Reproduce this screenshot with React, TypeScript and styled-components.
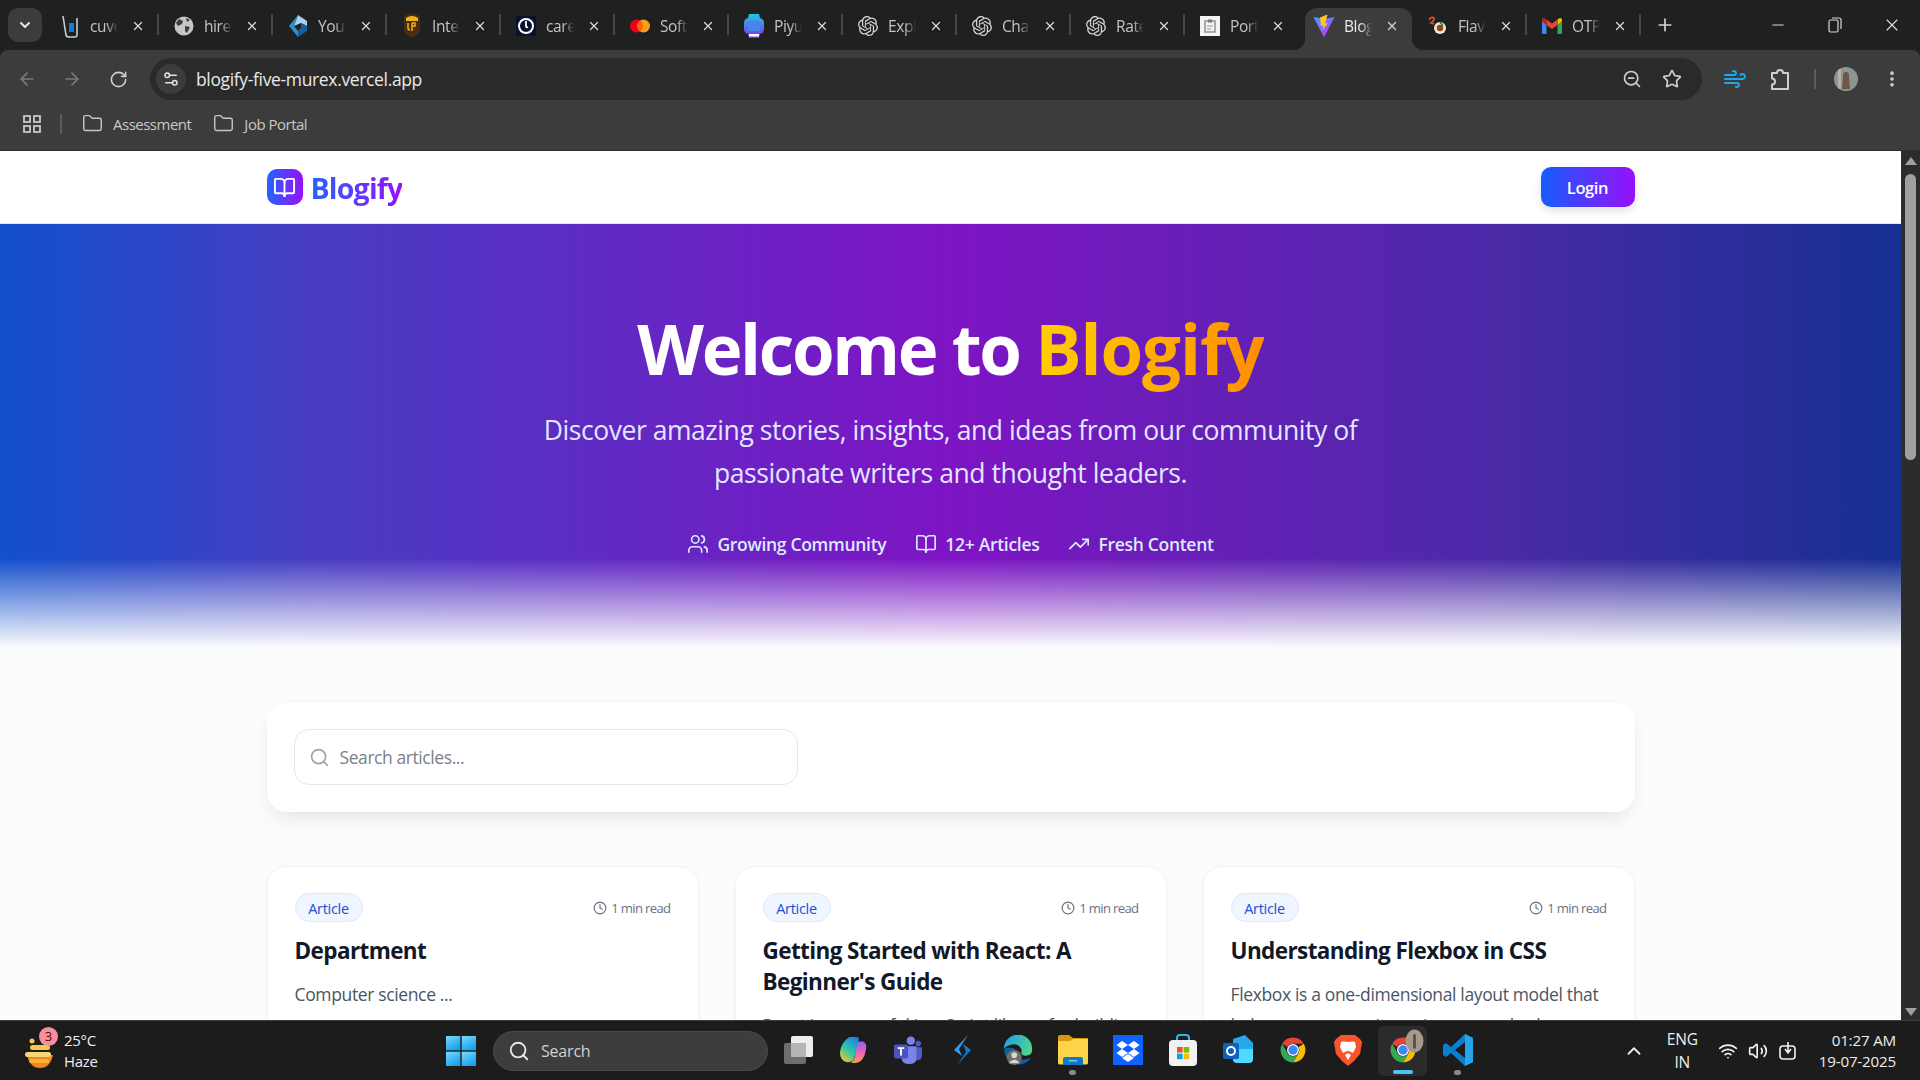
import React from "react";
import styled, { createGlobalStyle } from "styled-components";
import {
  ArrowLeft, ArrowRight, RotateCw, ZoomOut, Star, Wind, EllipsisVertical, Folder, Plus, X,
  ChevronDown, ChevronUp, Minus, Wifi, Volume2, Users, BookOpen, TrendingUp, Search, Clock, Settings2,
} from "lucide-react";
import { SiOpenai } from "react-icons/si";

const UI = `"Open Sans", "Noto Sans", "Liberation Sans", sans-serif`;

const Global = createGlobalStyle`
  html, body { margin: 0; padding: 0; width: 1920px; height: 1080px; overflow: hidden; background: #1f2120; }
  * { box-sizing: border-box; }
  body { font-family: ${UI}; }
`;

const Screen = styled.div`
  width: 1920px; height: 1080px; display: flex; flex-direction: column; overflow: hidden; background: #1f2120;
`;

/* ---------- tab strip ---------- */
const TabStrip = styled.div`
  height: 50px; flex: none; display: flex; align-items: stretch; padding-left: 8px; background: #1f2120; color: #c7c7c7; position: relative;
`;
const TabMenu = styled.div`
  width: 34px; height: 34px; margin-top: 8px; margin-right: 4px; border-radius: 10px; background: #3c3c3c;
  display: flex; align-items: center; justify-content: center; color: #e6e6e6; flex: none;
`;
const Tab = styled.div<{ $sep?: boolean; $active?: boolean }>`
  width: 114px; flex: none; display: flex; align-items: center; padding-left: 14px; position: relative; padding-top: 1px;
  color: ${(p) => (p.$active ? "#e8e8e8" : "#c4c4c4")};
  ${(p) => p.$sep && `&::after { content: ""; position: absolute; right: 1px; top: 14px; width: 2px; height: 21px; background: #464847; }`}
`;
const ActiveShape = styled.div`
  position: absolute; left: 5px; width: 107px; top: 8px; bottom: 0; background: #3c3c3c; border-radius: 12px 12px 0 0;
  &::before, &::after { content: ""; position: absolute; bottom: 0; width: 12px; height: 12px; }
  &::before { left: -12px; background: radial-gradient(circle at 0 0, transparent 12px, #3c3c3c 12.5px); }
  &::after { right: -12px; background: radial-gradient(circle at 100% 0, transparent 12px, #3c3c3c 12.5px); }
`;
const Fav = styled.span`
  width: 20px; height: 20px; flex: none; display: flex; align-items: center; justify-content: center; position: relative;
  svg { display: block; flex: none; }
`;
const TabTitle = styled.span`
  width: 28px; margin-left: 10px; overflow: hidden; white-space: nowrap; font-size: 15.5px; letter-spacing: -0.4px; position: relative;
  -webkit-mask-image: linear-gradient(to right, #000 60%, transparent 100%);
  mask-image: linear-gradient(to right, #000 60%, transparent 100%);
`;
const TabClose = styled.span`
  width: 14px; margin-left: 13px; display: flex; align-items: center; justify-content: center; position: relative; color: #d8d8d8;
`;
const NewTab = styled.div`
  width: 20px; margin-left: 13px; display: flex; align-items: center; justify-content: center; color: #d4d4d4;
`;
const WinControls = styled.div`
  margin-left: auto; display: flex; align-items: center; color: #d8d8d8; padding-bottom: 1px;
`;
const WinBtn = styled.div`
  width: 57px; height: 50px; display: flex; align-items: center; justify-content: center;
`;

/* ---------- toolbar ---------- */
const Toolbar = styled.div`
  height: 50px; flex: none; display: flex; align-items: flex-start; padding-top: 8px; background: #3c3c3c; border-radius: 8px 8px 0 0; color: #c8c8c8;
`;
const NavBtn = styled.div<{ $dim?: boolean; $w: number; $color?: string }>`
  width: ${(p) => p.$w}px; height: 42px; flex: none; display: flex; align-items: center; justify-content: center;
  color: ${(p) => p.$color ?? (p.$dim ? "#7a7a7a" : "#cfcfcf")};
`;
const Omnibox = styled.div`
  width: 1552px; height: 42px; flex: none; border-radius: 21px; background: #2a2a2a; display: flex; align-items: center; padding: 0 10px 0 6px; margin-left: 4px;
`;
const SiteChip = styled.div`
  width: 30px; height: 30px; border-radius: 50%; background: #3c3c3c; display: flex; align-items: center; justify-content: center; color: #e2e2e2; flex: none;
`;
const Url = styled.div`
  margin-left: 10px; font-size: 17.5px; color: #e8e8e8; letter-spacing: -0.35px; flex: 1; white-space: nowrap;
`;
const OmniIcon = styled.div`
  width: 40px; height: 30px; display: flex; align-items: center; justify-content: center; color: #cfcfcf; flex: none;
`;
const ToolSep = styled.div`
  width: 2px; height: 20px; margin: 11px 18px 0 22px; background: #5a5a5a; flex: none;
`;
const Avatar = styled.div`
  width: 24px; height: 24px; border-radius: 50%; margin-top: 9px; flex: none; overflow: hidden; display: block;
  svg { display: block; }
`;

/* ---------- bookmarks ---------- */
const Bookmarks = styled.div`
  height: 51px; flex: none; background: #3c3c3c; display: flex; align-items: center; padding: 0 0 3px 23px; color: #c8c8c8; font-size: 15px; letter-spacing: -0.5px;
  border-bottom: 1px solid #2e2e2e;
`;
const BarSep = styled.div`
  width: 2px; height: 20px; background: #5a5a5a; margin: 0 20px 0 19px;
`;
const Bookmark = styled.div`
  display: flex; align-items: center; gap: 10px; margin-right: 22px; white-space: nowrap;
`;

/* ---------- viewport ---------- */
const Viewport = styled.div`
  flex: 1; min-height: 0; display: flex; overflow: hidden;
`;
const Page = styled.div`
  flex: 1; min-width: 0; background: #fbfcfe; overflow: hidden; color: #111827; font-family: ${UI};
`;
const ScrollTrack = styled.div`
  width: 19px; flex: none; background: #2c2c2c; display: flex; flex-direction: column; align-items: center; position: relative;
`;
const ScrollArrow = styled.div<{ $down?: boolean }>`
  width: 0; height: 0; border-left: 6px solid transparent; border-right: 6px solid transparent;
  ${(p) => (p.$down ? "border-top: 8px solid #a0a0a0; position: absolute; bottom: 4px;" : "border-bottom: 8px solid #a0a0a0; margin-top: 6px;")}
`;
const ScrollThumb = styled.div`
  width: 11px; height: 286px; border-radius: 6px; background: #a0a0a0; margin-top: 9px;
`;
const Nav = styled.div`
  height: 73px; background: #fff; border-bottom: 1px solid #e5e7eb; position: relative; box-shadow: 0 1px 3px rgba(0,0,0,0.12);
`;
const Wrap = styled.div`
  width: 1368px; margin: 0 auto;
`;
const NavRow = styled(Wrap)`
  height: 72px; display: flex; align-items: center; justify-content: space-between;
`;
const Brand = styled.div`
  display: flex; align-items: center; gap: 8px;
`;
const BrandMark = styled.div`
  width: 36px; height: 36px; border-radius: 10px; background: linear-gradient(to right, #2563ff, #9810fa); display: flex; align-items: center; justify-content: center; color: #fff;
`;
const BrandName = styled.div`
  font-size: 28.5px; font-weight: 700; letter-spacing: -0.8px; line-height: 36px; margin-top: 2px;
  background: linear-gradient(to right, #2563ff, #9810fa); -webkit-background-clip: text; background-clip: text; color: transparent;
`;
const LoginBtn = styled.div`
  width: 94px; height: 40px; border-radius: 10px; background: linear-gradient(to right, #155dfc, #9810fa); color: #fff; display: flex; align-items: center; justify-content: center;
  font-size: 16.5px; font-weight: 600; letter-spacing: -0.4px; box-shadow: 0 4px 8px rgba(0,0,0,0.12);
`;
const Hero = styled.div`
  position: relative; height: 424px; padding-top: 79px; text-align: center; color: #fff;
  background: linear-gradient(to right, #1150cc 0%, #463dc3 15.8%, #7e14c4 50%, #4c2aa8 78%, #152f92 100%);
`;
const HeroFade = styled.div`
  position: absolute; left: 0; right: 0; bottom: 0; height: 90px; background: linear-gradient(to top, #fbfcfe, rgba(255,255,255,0));
`;
const HeroTitle = styled.h1`
  margin: 0; font-size: 69px; line-height: 90px; font-weight: 700; letter-spacing: -2.35px;
`;
const Accent = styled.span`
  letter-spacing: -1.1px;
  background: linear-gradient(to right, #ffcf00, #ff8f00); -webkit-background-clip: text; background-clip: text; color: transparent;
`;
const HeroText = styled.p`
  margin: 16px auto 0; width: 860px; font-size: 26.5px; line-height: 42.5px; color: #e0e7ff; letter-spacing: -0.45px;
`;
const Stats = styled.div`
  margin-top: 38px; height: 24px; display: flex; align-items: center; justify-content: center; gap: 29px; color: #dbeafe; font-size: 17.5px; font-weight: 600; letter-spacing: -0.3px;
`;
const Stat = styled.div`
  display: flex; align-items: center; gap: 8px; white-space: nowrap;
`;
const Main = styled(Wrap)`
  padding-top: 54px;
`;
const SearchCard = styled.div`
  height: 110px; border-radius: 20px; background: #fff; padding: 27px; box-shadow: 0 10px 20px -5px rgba(0,0,0,0.1), 0 0 4px rgba(0,0,0,0.02);
`;
const SearchBox = styled.div`
  width: 504px; height: 56px; border: 1px solid #e5e7eb; border-radius: 15px; display: flex; align-items: center; padding-left: 14px; gap: 10px; color: #9ca3af; font-size: 17.5px; background: #fff;
`;
const Placeholder = styled.span`
  color: #7b7f87; letter-spacing: -0.42px;
`;
const Grid = styled.div`
  margin-top: 54px; display: grid; grid-template-columns: repeat(3, 1fr); gap: 36px;
`;
const Card = styled.div`
  height: 320px; border-radius: 20px; background: #fff; border: 1px solid #f3f4f6; padding: 26px 27px; box-shadow: 0 1px 4px rgba(0,0,0,0.04);
`;
const CardHead = styled.div`
  height: 29px; display: flex; align-items: center; justify-content: space-between;
`;
const Badge = styled.div`
  height: 29px; width: 68px; border-radius: 15px; border: 1px solid #dbeafe; background: #eff6ff; color: #1d4ed8; font-size: 14.5px; font-weight: 500; display: flex; align-items: center; justify-content: center; letter-spacing: -0.3px; padding-top: 1px;
`;
const ReadTime = styled.div`
  display: flex; align-items: center; gap: 4px; color: #6b7280; font-size: 13.2px; letter-spacing: -0.7px;
`;
const CardTitle = styled.h3`
  margin: 13px 0 13px; font-size: 22.5px; line-height: 31px; font-weight: 700; color: #111827; letter-spacing: -0.6px;
`;
const CardText = styled.p`
  margin: 0; font-size: 17.5px; line-height: 30.5px; color: #4b5563; letter-spacing: -0.36px;
`;

/* ---------- taskbar ---------- */
const Taskbar = styled.div`
  height: 60px; flex: none; background: #1c1c1c; border-top: 1px solid #3d3d3d; display: flex; align-items: center; color: #fff; position: relative;
`;
const Weather = styled.div`
  width: 446px; flex: none; display: flex; align-items: center; padding-left: 24px; height: 100%;
`;
const WeatherIcon = styled.div`
  width: 32px; height: 36px; position: relative; flex: none;
`;
const CountBadge = styled.div`
  position: absolute; left: 15px; top: -6px; width: 19px; height: 19px; border-radius: 50%; background: #fa8d9c; color: #3a1216; font-size: 13px; display: flex; align-items: center; justify-content: center;
`;
const WeatherText = styled.div`
  margin-left: 8px; font-size: 15px; line-height: 21px; letter-spacing: -0.3px; color: #f0f0f0;
`;
const StartIcon = styled.div`
  width: 30px; flex: none; display: flex;
`;
const TaskSearch = styled.div`
  width: 275px; height: 40px; margin-left: 17px; flex: none; border-radius: 20px; background: #3d3d3d; border: 1px solid #4a4a4a; display: flex; align-items: center; padding-left: 14px; gap: 11px; font-size: 16px; color: #d0d0d0; letter-spacing: -0.2px;
`;
const TaskIcons = styled.div`
  display: flex; margin-left: 2px; flex: none;
`;
const TaskItem = styled.div<{ $active?: boolean; $dot?: boolean }>`
  width: 55px; height: 50px; flex: none; display: flex; align-items: center; justify-content: center; position: relative; padding-bottom: 2px;
  ${(p) => p.$active && `&::before { content: ""; position: absolute; left: 3px; right: 3px; top: 0; bottom: 0; background: #2b2b2b; border-radius: 6px; }
    &::after { content: ""; position: absolute; left: 18px; width: 20px; height: 4px; bottom: 2px; border-radius: 2px; background: #4cc2ff; }`}
  ${(p) => p.$dot && `&::after { content: ""; position: absolute; left: 24px; width: 7px; height: 5px; bottom: 1px; border-radius: 3px; background: #8a8a8a; }`}
  svg { position: relative; display: block; }
`;
const AvatarOverlay = styled.svg`
  && { position: absolute; left: 30px; top: 3px; }
`;
const Tray = styled.div`
  margin-left: auto; display: flex; align-items: center; padding-right: 24px; color: #ededed; letter-spacing: -0.2px;
`;
const TrayLang = styled.div`
  text-align: center; line-height: 23px; font-size: 15.5px; margin: 0 15px 0 22px;
`;
const TrayIcon = styled.div`
  width: 30px; display: flex; justify-content: center; color: #f0f0f0;
`;
const TrayClock = styled.div`
  text-align: right; line-height: 21px; font-size: 15.2px; margin-left: 16px; white-space: nowrap;
`;

/* ---------- drawn icons ---------- */
const OpenAI = () => <SiOpenai size={20} color="#d4d4d4" />;
const favs: Record<string, React.ReactNode> = {
  cuvette: (
    <svg width="20" height="24" viewBox="0 0 20 24"><path d="M3 2 L6 21 Q6.5 23 9 23 H15 Q17 23 17 21 V4" fill="none" stroke="#c6ccd4" strokeWidth="1.6" /><rect x="9" y="9" width="5" height="9" fill="#1577e0" /></svg>
  ),
  globe: (
    <svg width="20" height="20" viewBox="0 0 20 20"><circle cx="10" cy="10" r="9.5" fill="#c4c7c5" /><path d="M5 3 L9 5 L8 8 L4 10 L2 7 Z M11 10 L16 11 L13 17 L11 15 Z M12 2 L16 4 L13 6 Z" fill="#3a3d3c" /></svg>
  ),
  you: (
    <svg width="20" height="24" viewBox="0 0 20 24"><path d="M10 1 L19 7 L19 12 L13 9 L6 12 Z" fill="#a9cfe9" /><path d="M1 12 L10 1 L6 12 L10 17 L10 23 Z" fill="#2f8fd0" /><path d="M19 12 L13 9 L13 14 L10 17 L10 23 L19 17Z" fill="#175f9c" /></svg>
  ),
  ups: (
    <svg width="18" height="24" viewBox="0 0 18 24"><path d="M9 0 Q14 0 17 3 V15 Q17 20 9 24 Q1 20 1 15 V3 Q4 0 9 0Z" fill="#4b2d12" /><path d="M3 4 Q9 0 15 4 V7 H3Z" fill="#f2b21a" /><path d="M5 9 v5 q0 2 2 2 M9 9 v8 M9 9 h3 v3 h-3" fill="none" stroke="#f2b21a" strokeWidth="1.5" /></svg>
  ),
  care: (
    <svg width="20" height="20" viewBox="0 0 20 20"><rect width="20" height="20" fill="#08122c" /><circle cx="10" cy="10" r="7" fill="none" stroke="#fff" strokeWidth="2" /><path d="M10 5 V10 Q10 12 12 11" fill="none" stroke="#fff" strokeWidth="1.8" /></svg>
  ),
  master: (
    <svg width="20" height="14" viewBox="0 0 20 14"><circle cx="6.5" cy="7" r="6.5" fill="#eb001b" /><circle cx="13.5" cy="7" r="6.5" fill="#f79e1b" /><path d="M10 1.6 a6.5 6.5 0 0 1 0 10.8 a6.5 6.5 0 0 1 0 -10.8" fill="#ff5f00" /></svg>
  ),
  piyush: (
    <svg width="20" height="24" viewBox="0 0 20 24"><defs><linearGradient id="pg" x1="0" y1="0" x2="0" y2="1"><stop offset="0" stopColor="#1cc7e8" /><stop offset="1" stopColor="#8a2ce8" /></linearGradient></defs><path d="M5 0 H15 L16 4 Q20 5 20 9 V15 Q20 19 16 20 L15 24 H5 L4 20 Q0 19 0 15 V9 Q0 5 4 4Z" fill="url(#pg)" /><rect x="4" y="7" width="12" height="10" rx="1" fill="#4a83ee" /><rect x="5" y="20" width="10" height="2.5" fill="#fff" /></svg>
  ),
  port: (
    <svg width="20" height="20" viewBox="0 0 20 20"><rect width="20" height="20" fill="#f4f4f4" /><rect x="5" y="5" width="10" height="11" fill="none" stroke="#7a7a7a" strokeWidth="1.2" /><rect x="8" y="3.5" width="4" height="3" fill="#7a7a7a" /><path d="M7 10 h6 M7 13 h4" stroke="#9a9a9a" strokeWidth="1.2" /></svg>
  ),
  vite: (
    <svg width="22" height="24" viewBox="0 0 22 24"><defs><linearGradient id="vg" x1="0" y1="0" x2="0.6" y2="1"><stop offset="0" stopColor="#41a6ff" /><stop offset="1" stopColor="#bd34fe" /></linearGradient></defs><path d="M0.5 3 L11 5 L21.5 3 L11 23.5 Z" fill="url(#vg)" /><path d="M13 1 L7 3.5 L8 12 L10.5 11.5 L9.5 16 L15 9 L12 9.5 L14.5 1 Z" fill="#ffc517" /></svg>
  ),
  flav: (
    <svg width="20" height="20" viewBox="0 0 20 20"><path d="M1 4 Q3 0 6 2 Q7 4 3 7 L6 8" fill="none" stroke="#e8502c" strokeWidth="1.6" /><circle cx="12" cy="12" r="6" fill="#f3e6cf" /><circle cx="12" cy="12" r="3.2" fill="#8b4a20" /><path d="M12 6 L15 10" stroke="#2f7a3b" strokeWidth="1.5" /></svg>
  ),
  gmail: (
    <svg width="20" height="16" viewBox="0 0 20 16"><path d="M0 3 V14.5 Q0 16 1.5 16 H4.5 V7Z" fill="#4285f4" /><path d="M20 3 V14.5 Q20 16 18.5 16 H15.5 V7Z" fill="#34a853" /><path d="M15.5 7 V1.5 L17 0.4 Q20 -0.8 20 3Z" fill="#fbbc04" /><path d="M4.5 7 V1.5 L10 5.5 L15.5 1.5 V7 L10 11Z" fill="#ea4335" /><path d="M0 3 Q0 -0.8 3 0.4 L4.5 1.5 V7Z" fill="#c5221f" /></svg>
  ),
};
const tabs = [
  { f: "cuvette", t: "cuvette", s: 1 }, { f: "globe", t: "hirejobs", s: 1 }, { f: "you", t: "Your", s: 1 }, { f: "ups", t: "Intern", s: 1 },
  { f: "care", t: "careers", s: 1 }, { f: "master", t: "Software", s: 1 }, { f: "piyush", t: "Piyush", s: 1 }, { f: "ai", t: "Explore", s: 1 },
  { f: "ai", t: "ChatGPT", s: 1 }, { f: "ai", t: "Rate", s: 1 }, { f: "port", t: "Portfolio", s: 0 }, { f: "vite", t: "Blogify", s: 0, a: 1 },
  { f: "flav", t: "Flavor", s: 1 }, { f: "gmail", t: "OTP", s: 1 },
];

const Chrome = ({ size = 30 }: { size?: number }) => (
  <svg width={size} height={size} viewBox="0 0 48 48">
    <path d="M24 4 A20 20 0 0 1 41.3 14 H24 A10 10 0 0 0 15.3 19 L6.7 14 A20 20 0 0 1 24 4Z" fill="#ea4335" />
    <path d="M41.3 14 A20 20 0 0 1 24 44 L32.7 29 A10 10 0 0 0 32.7 19 Z" fill="#fbbc04" />
    <path d="M6.7 14 A20 20 0 0 0 24 44 L32.7 29 A10 10 0 0 1 15.3 29 Z" fill="#34a853" />
    <circle cx="24" cy="24" r="9.5" fill="#fff" /><circle cx="24" cy="24" r="7.5" fill="#4285f4" />
  </svg>
);
const Win = () => (
  <svg width="30" height="30" viewBox="0 0 30 30"><defs><linearGradient id="wg" x1="0" y1="0" x2="0.5" y2="1"><stop offset="0" stopColor="#7fd9fb" /><stop offset="1" stopColor="#14a4f0" /></linearGradient></defs><rect width="14.3" height="14.3" fill="url(#wg)" /><rect x="15.7" width="14.3" height="14.3" fill="url(#wg)" /><rect y="15.7" width="14.3" height="14.3" fill="url(#wg)" /><rect x="15.7" y="15.7" width="14.3" height="14.3" fill="url(#wg)" /></svg>
);
const taskIcons: { key: string; node: React.ReactNode; active?: boolean; dot?: boolean }[] = [
  { key: "view", node: (<svg width="30" height="30" viewBox="0 0 30 30"><rect x="1" y="8" width="22" height="21" rx="2" fill="#6e6e6e" /><rect x="8" y="1" width="22" height="21" rx="2" fill="#ededed" /><rect x="8" y="8" width="15" height="14" fill="#b5b5b5" /></svg>) },
  { key: "copilot", node: (<svg width="28" height="28" viewBox="0 0 30 30"><defs><linearGradient id="c1" x1="0.8" y1="0" x2="0.2" y2="1"><stop offset="0" stopColor="#1f7de8" /><stop offset="0.55" stopColor="#2fc9a0" /><stop offset="1" stopColor="#f4c430" /></linearGradient><linearGradient id="c2" x1="0.5" y1="0" x2="0.5" y2="1"><stop offset="0" stopColor="#9a5bf0" /><stop offset="0.6" stopColor="#f06bb0" /><stop offset="1" stopColor="#f7a04a" /></linearGradient></defs><path d="M19 6 H26 Q30 8 29 14 Q27 28 18 29 H13 Q16 27 17 22 Z" fill="url(#c2)" /><path d="M11 1 H19 Q22 1 21 5 L16 24 Q15 28 9 28 Q1 27 1 18 Q2 7 11 1Z" fill="url(#c1)" /></svg>) },
  { key: "teams", node: (<svg width="30" height="28" viewBox="0 0 30 30"><circle cx="18" cy="5" r="4.5" fill="#7b83eb" /><circle cx="26" cy="8" r="3" fill="#5059c9" /><path d="M21 12 H30 V21 Q30 26 25 26 Q22 26 21 24Z" fill="#5059c9" /><path d="M8 11 H24 V24 Q24 30 16 30 Q9 30 8 24Z" fill="#7b83eb" /><rect x="0" y="9" width="15" height="15" rx="2" fill="#4b53bc" /><path d="M4 13 H11 M7.5 13 V21" stroke="#fff" strokeWidth="2" /></svg>) },
  { key: "cursor", node: (<svg width="20" height="30" viewBox="0 0 20 30"><path d="M15 0 L1 15 L9 21 L6 14 Z" fill="#2e9bf0" /><path d="M4 30 L18 15 L10 9 L13 17 Z" fill="#1878c8" /></svg>) },
  { key: "edge", node: (<svg width="30" height="30" viewBox="0 0 32 32"><defs><linearGradient id="e1" x1="0" y1="0.2" x2="1" y2="0.6"><stop offset="0" stopColor="#1f9fe6" /><stop offset="1" stopColor="#4fd58a" /></linearGradient></defs><path d="M1 15 A15 15 0 0 1 31 14 Q32 22 24 22 Q18 22 20 16 Q17 9 10 10 Q3 11 1 15Z" fill="url(#e1)" /><path d="M1 15 Q2 28 14 31 Q24 33 30 24 Q22 28 17 25 Q11 21 13 15 Q8 12 1 15Z" fill="#115ea3" /><circle cx="12" cy="24" r="8" fill="#6f6f6f" /><circle cx="12" cy="21.5" r="3" fill="#d6d6d6" /><path d="M6 30 Q12 23 18 30Z" fill="#d6d6d6" /></svg>) },
  { key: "files", dot: true, node: (<svg width="30" height="30" viewBox="0 0 30 30"><path d="M0 2 Q0 0 2 0 H11 L15 3 H30 V28 H0Z" fill="#d79a0c" /><path d="M0 6 H12 L15 4 H30 V28 Q30 29.5 28 29.5 H2 Q0 29.5 0 28Z" fill="#fcd548" /><path d="M5 30 V24 Q5 22 7 22 H23 Q25 22 25 24 V30Z" fill="#0f78c8" /><rect x="11" y="25" width="8" height="1.5" fill="#8ccaf5" /></svg>) },
  { key: "dropbox", node: (<svg width="30" height="30" viewBox="0 0 30 30"><rect width="30" height="30" fill="#0f62fe" /><path d="M9 6 L15 10 L9 14 L3.5 10Z M21 6 L26.5 10 L21 14 L15 10Z M9 14 L15 18 L9 22 L3.5 18Z M21 14 L26.5 18 L21 22 L15 18Z M9 23 L15 19 L21 23 L15 27Z" fill="#fff" /></svg>) },
  { key: "store", node: (<svg width="30" height="32" viewBox="0 0 30 32"><path d="M9 8 V4 Q9 1 12 1 H18 Q21 1 21 4 V8" fill="none" stroke="#2ab5ef" strokeWidth="2" /><rect x="1" y="6" width="28" height="26" rx="4" fill="#f2f2f2" /><rect x="9" y="13" width="5.6" height="5.6" fill="#f25022" /><rect x="15.6" y="13" width="5.6" height="5.6" fill="#7fba00" /><rect x="9" y="19.6" width="5.6" height="5.6" fill="#00a4ef" /><rect x="15.6" y="19.6" width="5.6" height="5.6" fill="#ffb900" /></svg>) },
  { key: "outlook", node: (<svg width="30" height="30" viewBox="0 0 30 30"><path d="M10 4 L22 0 L30 8 V22 Q30 26 26 26 H10Z" fill="#28a8ea" /><path d="M10 14 H30 V24 Q30 28 26 28 H14 Q10 28 10 24Z" fill="#50d9ff" /><rect x="0" y="8" width="16" height="16" rx="2" fill="#0f5fbe" /><circle cx="8" cy="16" r="4" fill="none" stroke="#fff" strokeWidth="2" /></svg>) },
  { key: "chrome", node: <Chrome /> },
  { key: "brave", node: (<svg width="28" height="32" viewBox="0 0 28 32"><path d="M7 1 H21 L26 5 L28 8 L26 20 L20 27 L14 32 L8 27 L2 20 L0 8 L2 5Z" fill="#fb542b" /><path d="M14 8 Q9 7 7 8 L6 13 L9 19 L13 17 H15 L19 19 L22 13 L21 8 Q19 7 14 8Z M11 21 L14 19 L17 21 L14 26Z" fill="#fff" /></svg>) },
  { key: "chrome2", active: true, node: (<><Chrome /><AvatarOverlay width="19" height="24" viewBox="0 0 20 24"><ellipse cx="10" cy="12" rx="9.5" ry="12" fill="#a59a8a" /><path d="M10 5 V20" stroke="#5a5045" strokeWidth="3" /></AvatarOverlay></>) },
  { key: "code", dot: true, node: (<svg width="30" height="32" viewBox="0 0 30 32"><path d="M22 0 L30 4 V28 L22 32 L8 19 L3 23 L0 21 V11 L3 9 L8 13Z" fill="#0a7fd1" /><path d="M22 8 L12 16 L22 24Z" fill="#1c1c1c" /><path d="M22 0 L30 4 V28 L22 32Z" fill="#28a3e8" /></svg>) },
];

export default function App() {
  return (
    <Screen>
      <Global />
      <TabStrip>
        <TabMenu><ChevronDown size={16} strokeWidth={3} /></TabMenu>
        {tabs.map((t) => (
          <Tab key={t.t} $sep={!!t.s} $active={!!t.a}>
            {t.a ? <ActiveShape /> : null}
            <Fav>{t.f === "ai" ? <OpenAI /> : favs[t.f]}</Fav>
            <TabTitle>{t.t}</TabTitle>
            <TabClose><X size={16} strokeWidth={2.2} /></TabClose>
          </Tab>
        ))}
        <NewTab><Plus size={20} strokeWidth={2} /></NewTab>
        <WinControls>
          <WinBtn><Minus size={18} strokeWidth={1.4} /></WinBtn>
          <WinBtn>
            <svg width="14" height="16" viewBox="0 0 14 16" fill="none" stroke="#d8d8d8" strokeWidth="1.2"><rect x="1" y="3" width="9" height="12" rx="1.5" /><path d="M4 1 H11 Q13 1 13 3 V12" /></svg>
          </WinBtn>
          <WinBtn><X size={20} strokeWidth={1.4} /></WinBtn>
        </WinControls>
      </TabStrip>
      <Toolbar>
        <NavBtn $dim $w={54}><ArrowLeft size={20} strokeWidth={2} /></NavBtn>
        <NavBtn $dim $w={36}><ArrowRight size={20} strokeWidth={2} /></NavBtn>
        <NavBtn $w={56}><RotateCw size={19} strokeWidth={2} /></NavBtn>
        <Omnibox>
          <SiteChip><Settings2 size={18} strokeWidth={2} /></SiteChip>
          <Url>blogify-five-murex.vercel.app</Url>
          <OmniIcon><ZoomOut size={20} strokeWidth={2} /></OmniIcon>
          <OmniIcon><Star size={20} strokeWidth={2} /></OmniIcon>
        </Omnibox>
        <NavBtn $w={66} $color="#1da6e8"><Wind size={24} strokeWidth={2} /></NavBtn>
        <NavBtn $w={24}>
          <svg width="22" height="24" viewBox="0 0 22 24" fill="none" stroke="#cfcfcf" strokeWidth="2" strokeLinejoin="round"><path d="M3 6 H8 a3 3 0 0 1 6 0 H19 V22 H3 V17.5 a3 3 0 0 0 0 -6 Z" /></svg>
        </NavBtn>
        <ToolSep />
        <Avatar>
          <svg width="24" height="24" viewBox="0 0 24 24"><rect width="24" height="24" fill="#8d9590" /><path d="M12 5 a3 3 0 0 1 3 3 v3 l1 11 h-8 l1 -11 v-3 a3 3 0 0 1 3 -3z" fill="#6b5a48" /><rect x="4" y="2" width="3" height="20" fill="#b7b1a4" /></svg>
        </Avatar>
        <NavBtn $w={68}><EllipsisVertical size={20} strokeWidth={2.4} /></NavBtn>
      </Toolbar>
      <Bookmarks>
        <svg width="18" height="18" viewBox="0 0 18 18" fill="none" stroke="#c8c8c8" strokeWidth="1.8"><rect x="1" y="1" width="6" height="6" /><rect x="11" y="1" width="6" height="6" /><rect x="1" y="11" width="6" height="6" /><rect x="11" y="11" width="6" height="6" /></svg>
        <BarSep />
        <Bookmark><Folder size={21} strokeWidth={1.6} /> Assessment</Bookmark>
        <Bookmark><Folder size={21} strokeWidth={1.6} /> Job Portal</Bookmark>
      </Bookmarks>
      <Viewport>
        <Page>
          <Nav>
            <NavRow>
              <Brand>
                <BrandMark><BookOpen size={23} strokeWidth={2} /></BrandMark>
                <BrandName>Blogify</BrandName>
              </Brand>
              <LoginBtn>Login</LoginBtn>
            </NavRow>
          </Nav>
          <Hero>
            <HeroTitle>Welcome to <Accent>Blogify</Accent></HeroTitle>
            <HeroText>Discover amazing stories, insights, and ideas from our community of passionate writers and thought leaders.</HeroText>
            <Stats>
              <Stat><Users size={22} strokeWidth={1.8} /> Growing Community</Stat>
              <Stat><BookOpen size={22} strokeWidth={1.8} /> 12+ Articles</Stat>
              <Stat><TrendingUp size={22} strokeWidth={1.8} /> Fresh Content</Stat>
            </Stats>
            <HeroFade />
          </Hero>
          <Main>
            <SearchCard>
              <SearchBox><Search size={21} strokeWidth={1.8} /><Placeholder>Search articles...</Placeholder></SearchBox>
            </SearchCard>
            <Grid>
              <Card>
                <CardHead><Badge>Article</Badge><ReadTime><Clock size={14} strokeWidth={2} /> 1 min read</ReadTime></CardHead>
                <CardTitle>Department</CardTitle>
                <CardText>Computer science ...</CardText>
              </Card>
              <Card>
                <CardHead><Badge>Article</Badge><ReadTime><Clock size={14} strokeWidth={2} /> 1 min read</ReadTime></CardHead>
                <CardTitle>Getting Started with React: A Beginner's Guide</CardTitle>
                <CardText>React is a powerful JavaScript library for building user interfaces.</CardText>
              </Card>
              <Card>
                <CardHead><Badge>Article</Badge><ReadTime><Clock size={14} strokeWidth={2} /> 1 min read</ReadTime></CardHead>
                <CardTitle>Understanding Flexbox in CSS</CardTitle>
                <CardText>Flexbox is a one-dimensional layout model that helps you arrange items in rows and columns.</CardText>
              </Card>
            </Grid>
          </Main>
        </Page>
        <ScrollTrack>
          <ScrollArrow />
          <ScrollThumb />
          <ScrollArrow $down />
        </ScrollTrack>
      </Viewport>
      <Taskbar>
        <Weather>
          <WeatherIcon>
            <svg width="32" height="36" viewBox="0 0 32 36"><circle cx="8" cy="8" r="2.5" fill="#f7c948" /><path d="M3 22 Q6 35 16 35 Q26 35 29 22Z" fill="#f08a1c" /><rect x="6" y="12" width="20" height="5" rx="2.5" fill="#f7c948" /><rect x="1" y="19" width="26" height="5" rx="2.5" fill="#f7d774" /><rect x="5" y="26" width="20" height="4" rx="2" fill="#f9b233" /></svg>
            <CountBadge>3</CountBadge>
          </WeatherIcon>
          <WeatherText>25°C<br />Haze</WeatherText>
        </Weather>
        <StartIcon><Win /></StartIcon>
        <TaskSearch><Search size={22} strokeWidth={2} color="#e8e8e8" /> Search</TaskSearch>
        <TaskIcons>
          {taskIcons.map((i) => (
            <TaskItem key={i.key} $active={i.active} $dot={i.dot}>{i.node}</TaskItem>
          ))}
        </TaskIcons>
        <Tray>
          <ChevronUp size={22} strokeWidth={2} />
          <TrayLang>ENG<br />IN</TrayLang>
          <TrayIcon><Wifi size={20} strokeWidth={2} /></TrayIcon>
          <TrayIcon><Volume2 size={20} strokeWidth={2} /></TrayIcon>
          <TrayIcon>
            <svg width="20" height="20" viewBox="0 0 20 20" fill="none" stroke="#f0f0f0" strokeWidth="1.6"><rect x="2" y="5" width="15" height="13" rx="3" /><path d="M10 1 V11 M7 8 L10 12 L13 8" /></svg>
          </TrayIcon>
          <TrayClock>01:27 AM<br />19-07-2025</TrayClock>
        </Tray>
      </Taskbar>
    </Screen>
  );
}
